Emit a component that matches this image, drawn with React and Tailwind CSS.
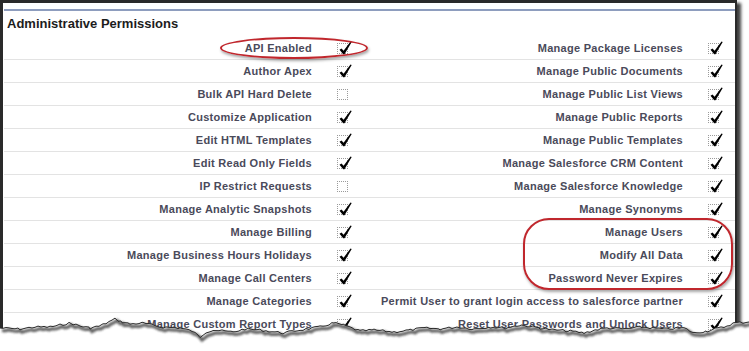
import React from 'react';

const leftPerms = [
  ['API Enabled', true],
  ['Author Apex', true],
  ['Bulk API Hard Delete', false],
  ['Customize Application', true],
  ['Edit HTML Templates', true],
  ['Edit Read Only Fields', true],
  ['IP Restrict Requests', false],
  ['Manage Analytic Snapshots', true],
  ['Manage Billing', true],
  ['Manage Business Hours Holidays', true],
  ['Manage Call Centers', true],
  ['Manage Categories', true],
  ['Manage Custom Report Types', true],
];

const rightPerms = [
  ['Manage Package Licenses', true],
  ['Manage Public Documents', true],
  ['Manage Public List Views', true],
  ['Manage Public Reports', true],
  ['Manage Public Templates', true],
  ['Manage Salesforce CRM Content', true],
  ['Manage Salesforce Knowledge', true],
  ['Manage Synonyms', true],
  ['Manage Users', true],
  ['Modify All Data', true],
  ['Password Never Expires', true],
  ['Permit User to grant login access to salesforce partner', true],
  ['Reset User Passwords and Unlock Users', true],
];

// rough outline of the torn bottom edge (x, y)
const edgeKeys = [
  [0, 328], [20, 329], [35, 327], [50, 327], [60, 325], [70, 323], [80, 326], [90, 328],
  [100, 326], [115, 319], [122, 322], [130, 324], [143, 323], [160, 327], [180, 328],
  [192, 331], [200, 337], [206, 332], [213, 330], [233, 332], [245, 329], [260, 330],
  [283, 333], [300, 330], [320, 327], [333, 323], [343, 325], [360, 331], [374, 330],
  [394, 332], [410, 330], [424, 328], [440, 329], [457, 327], [474, 329], [490, 327],
  [505, 328], [521, 325], [540, 328], [554, 330], [570, 331], [584, 333], [595, 330],
  [607, 328], [625, 329], [641, 327], [664, 329], [684, 328], [694, 333], [707, 331],
  [715, 329], [724, 327], [734, 323], [749, 322],
];

const buildEdge = () => {
  let seed = 7;
  const rnd = () => {
    seed = (seed * 9301 + 49297) % 233280;
    return seed / 233280;
  };
  const pts = [];
  for (let i = 0; i < edgeKeys.length - 1; i++) {
    const [x1, y1] = edgeKeys[i];
    const [x2, y2] = edgeKeys[i + 1];
    for (let x = x1; x < x2; x += 3) {
      const t = (x - x1) / (x2 - x1);
      pts.push([x, y1 + (y2 - y1) * t + (rnd() - 0.5) * 2.2 - 300]);
    }
  }
  pts.push([749, edgeKeys[edgeKeys.length - 1][1] - 300]);
  return pts;
};

const edge = buildEdge();
const edgeLine = edge.map(([x, y], i) => `${i ? 'L' : 'M'}${x},${y.toFixed(1)}`).join(' ');
const edgeFill = `${edgeLine} L749,60 L0,60 Z`;

const CheckBox = ({ checked }) => (
  <span className="relative inline-block w-[11px] h-[11px] border border-dotted border-[#9a9a9a]">
    {checked && (
      <svg className="absolute left-[1px] top-[-3px]" width="13" height="14" viewBox="0 0 13 14">
        <path d="M0.5,8.7 L2.5,7.4 L4.6,9.8 L11.5,0.4 L12.7,1.1 L5.5,13.2 L4.2,13.2 Z" fill="#000" />
      </svg>
    )}
  </span>
);

const App = () => {
  return (
    <div className="relative w-[749px] h-[351px] bg-white overflow-hidden" style={{ fontFamily: '"Liberation Sans", Arial, sans-serif' }}>
      <div className="w-[737px] h-[345px] border-t-[3px] border-l-[3px] border-r-[2px] border-[#2a2a2a] shadow-[4px_3px_3px_rgba(0,0,0,0.75)] overflow-hidden">
        <div className="mt-[6px] ml-px border-t-2 border-[#8e9dbe]">
          <h3 className="h-[26px] pt-[5px] pl-[3px] text-[13px] leading-[15px] font-bold text-[#1c1c1c]">
            Administrative Permissions
          </h3>
          {leftPerms.map((left, i) => {
            const right = rightPerms[i];
            return (
              <div key={left[0]} className="grid grid-cols-[314px_57px_314px_45px] h-[23px] border-b border-[#e3e3e3] items-center text-[11px] tracking-[0.28px] font-bold text-[#4a4a5a]">
                <div className="text-right pr-[6px] whitespace-nowrap">{left[0]}</div>
                <div className="pl-[19px] flex items-center"><CheckBox checked={left[1]} /></div>
                <div className="text-right pr-[6px] whitespace-nowrap">{right[0]}</div>
                <div className="pl-[19px] flex items-center"><CheckBox checked={right[1]} /></div>
              </div>
            );
          })}
        </div>
      </div>

      {/* highlight marks */}
      <div className="absolute left-[220px] top-[37px] w-[148px] h-[22px] rounded-[50%] border-2 border-[#c0272d] shadow-[1px_2px_3px_rgba(0,0,0,0.35)]" />
      <div className="absolute left-[523px] top-[218px] w-[210px] h-[72px] rounded-[26px] border-2 border-[#c0272d] shadow-[1px_2px_3px_rgba(0,0,0,0.35)]" />

      {/* torn bottom edge */}
      <svg className="absolute left-0 top-[300px]" width="749" height="51" viewBox="0 0 749 51">
        <defs>
          <filter id="tornBlur" x="-5%" y="-50%" width="110%" height="200%">
            <feGaussianBlur stdDeviation="1.1" />
          </filter>
        </defs>
        <path d={edgeFill} fill="#fff" />
        <path d={edgeLine} transform="translate(2,2.5)" fill="none" stroke="#3a3a3a" strokeWidth="3.2" opacity="0.8" filter="url(#tornBlur)" />
        <path d={edgeLine} fill="none" stroke="#2a2a2a" strokeWidth="1" />
      </svg>
    </div>
  );
};

export default App;
